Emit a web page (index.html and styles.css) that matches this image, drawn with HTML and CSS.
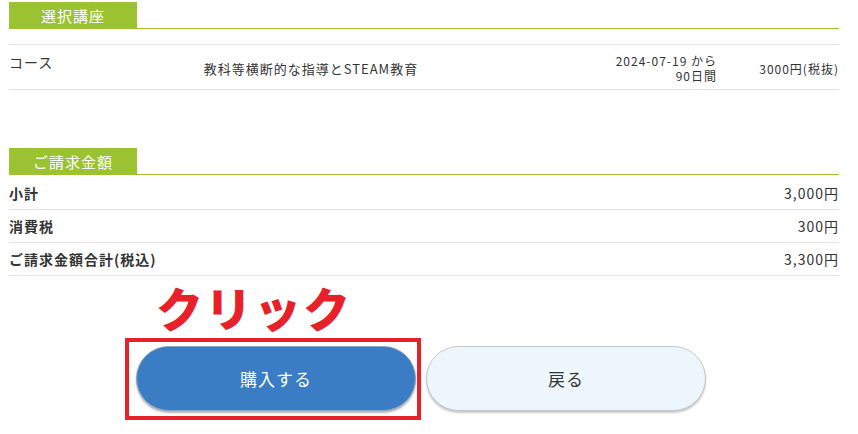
FILE: index.html
```html
<!DOCTYPE html>
<html lang="ja">
<head>
<meta charset="utf-8">
<title>購入確認</title>
<link rel="stylesheet" href="styles.css">
</head>
<body>
<div class="page">
  <section class="section">
    <div class="sec-head"><span class="sec-tab">選択講座</span></div>
    <div class="course-row">
      <div class="course-label">コース</div>
      <div class="course-title">教科等横断的な指導とSTEAM教育</div>
      <div class="course-date"><span class="date-line">2024-07-19 から</span><span class="date-line">90日間</span></div>
      <div class="course-price">3000円(税抜)</div>
    </div>
  </section>

  <section class="section billing">
    <div class="sec-head"><span class="sec-tab">ご請求金額</span></div>
    <div class="bill-row first">
      <div class="bill-label">小計</div>
      <div class="bill-value">3,000円</div>
    </div>
    <div class="bill-row">
      <div class="bill-label">消費税</div>
      <div class="bill-value">300円</div>
    </div>
    <div class="bill-row">
      <div class="bill-label">ご請求金額合計(税込)</div>
      <div class="bill-value">3,300円</div>
    </div>
  </section>

  <div class="click-note">クリック</div>

  <div class="actions">
    <div class="highlight-box">
      <button class="btn btn-primary" type="button">購入する</button>
    </div>
    <button class="btn btn-back" type="button">戻る</button>
  </div>
</div>
</body>
</html>
```

FILE: styles.css
```css
* { box-sizing: border-box; }

html, body {
  margin: 0;
  padding: 0;
  background: #ffffff;
}

body {
  font-family: "Noto Sans CJK JP", "Noto Sans", sans-serif;
  color: #333333;
  letter-spacing: 1px;
}

.page {
  width: 858px;
  padding: 2px 19px 0 9px;
}

.sec-head {
  display: flex;
  border-bottom: 1px solid #9bc231;
}

.sec-tab {
  display: flex;
  align-items: center;
  justify-content: center;
  width: 128px;
  height: 26px;
  background: #9bc231;
  color: #ffffff;
  font-size: 15px;
  line-height: 1;
}

.course-row {
  display: grid;
  grid-template-columns: 120px 364px 1fr 122px;
  margin-top: 15px;
  padding: 8px 0 6px;
  border-top: 1px solid #e2e2e2;
  border-bottom: 1px solid #e2e2e2;
}

.course-label {
  align-self: start;
  font-size: 14px;
  line-height: 18px;
}

.course-title {
  align-self: center;
  text-align: center;
  font-size: 13px;
  line-height: 18px;
  padding-top: 2px;
}

.course-date {
  align-self: start;
  display: flex;
  flex-direction: column;
  align-items: flex-end;
  font-size: 12px;
  line-height: 15px;
}

.date-line {
  display: block;
  white-space: nowrap;
}

.course-price {
  align-self: center;
  text-align: right;
  font-size: 12px;
  line-height: 18px;
  padding-top: 2px;
  white-space: nowrap;
}

.billing {
  margin-top: 58px;
}

.bill-row {
  display: flex;
  justify-content: space-between;
  align-items: center;
  height: 33px;
  border-bottom: 1px solid #e2e2e2;
  font-size: 14px;
}

.bill-row.first {
  height: 35px;
  padding-top: 2px;
}

.bill-label {
  font-weight: bold;
}

.bill-value {
  font-weight: normal;
}

.click-note {
  margin-top: 8px;
  padding-left: 147px;
  font-size: 47px;
  font-weight: 900;
  line-height: 46px;
  letter-spacing: 2px;
  color: #e8202a;
}

.actions {
  display: flex;
  align-items: flex-start;
  gap: 5px;
  margin-top: 8px;
  padding-left: 116px;
}

.highlight-box {
  display: flex;
  border: 4px solid #e8202a;
  padding: 4px 1px 5px 7px;
}

.btn {
  flex: none;
  width: 280px;
  height: 65px;
  border-radius: 33px;
  font-family: "Noto Sans CJK JP", "Noto Sans", sans-serif;
  font-size: 17px;
  letter-spacing: 1px;
  cursor: pointer;
}

.btn-primary {
  background: #3b7dc4;
  color: #ffffff;
  border: 1px solid #8ea6c0;
  box-shadow: 0 2px 2px #b5b5b5;
}

.btn-back {
  margin-top: 8px;
  background: #eef6fd;
  color: #333333;
  border: 1px solid #c6c6c6;
  box-shadow: 0 2px 2px #c9c9c9;
}
```
